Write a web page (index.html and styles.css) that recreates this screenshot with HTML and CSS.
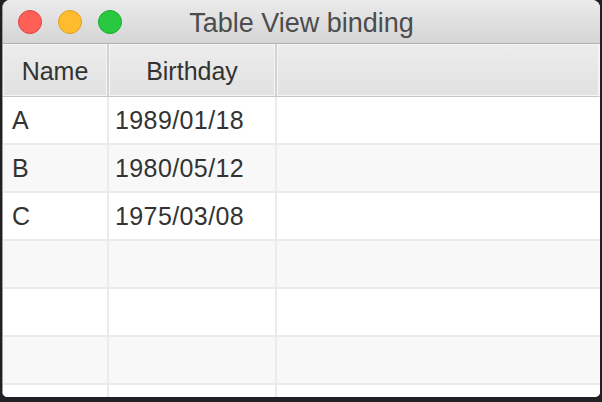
FILE: index.html
```html
<!DOCTYPE html>
<html>
<head>
<meta charset="utf-8">
<link rel="stylesheet" href="styles.css">
</head>
<body>
<div class="window">
  <div class="titlebar">
    <div class="lights">
      <span class="light red"></span>
      <span class="light yellow"></span>
      <span class="light green"></span>
    </div>
    <div class="title">Table View binding</div>
    <div></div>
  </div>
  <div class="table">
    <div class="head">Name</div>
    <div class="head">Birthday</div>
    <div class="head last"></div>

    <div class="cell odd">A</div>
    <div class="cell odd date">1989/01/18</div>
    <div class="cell odd last"></div>

    <div class="cell even">B</div>
    <div class="cell even date">1980/05/12</div>
    <div class="cell even last"></div>

    <div class="cell odd">C</div>
    <div class="cell odd date">1975/03/08</div>
    <div class="cell odd last"></div>

    <div class="cell even"></div>
    <div class="cell even"></div>
    <div class="cell even last"></div>

    <div class="cell odd"></div>
    <div class="cell odd"></div>
    <div class="cell odd last"></div>

    <div class="cell even"></div>
    <div class="cell even"></div>
    <div class="cell even last"></div>

    <div class="cell odd"></div>
    <div class="cell odd"></div>
    <div class="cell odd last"></div>
  </div>
</div>
</body>
</html>
```

FILE: styles.css
```css
html, body {
  margin: 0;
  padding: 0;
}
body {
  width: 602px;
  height: 402px;
  background: #1f2124;
  overflow: hidden;
  font-family: "Liberation Sans", Arial, sans-serif;
}
.window {
  margin-left: 2px;
  width: 598px;
  height: 397px;
  box-sizing: border-box;
  border-left: 1px solid #9c9c9c;
  border-radius: 8px 8px 5px 5px;
  background: #ffffff;
  overflow: hidden;
  display: flex;
  flex-direction: column;
}
.titlebar {
  height: 43px;
  flex: none;
  border-bottom: 1px solid #b1b1b1;
  background: linear-gradient(#ebebeb, #d5d5d5);
  display: grid;
  grid-template-columns: 1fr auto 1fr;
  align-items: center;
}
.lights {
  display: flex;
  gap: 16px;
  padding-left: 15px;
}
.light {
  width: 24px;
  height: 24px;
  border-radius: 50%;
  box-sizing: border-box;
}
.red { background: #fe5f57; border: 1px solid #e0443e; }
.yellow { background: #febc2e; border: 1px solid #dea123; }
.green { background: #28c840; border: 1px solid #1aab29; }
.title {
  font-size: 27px;
  color: #4c4c4c;
  padding-top: 3px;
}
.table {
  flex: 1;
  display: grid;
  grid-template-columns: 106px 168px 1fr;
  grid-auto-rows: 48px;
  grid-template-rows: 53px;
  overflow: hidden;
}
.head {
  box-sizing: border-box;
  background: linear-gradient(#ededed, #e1e1e1);
  border-right: 2px solid #d3d3d3;
  border-bottom: 1px solid #c6c6c6;
  box-shadow: inset 0 0 0 1px #f5f5f5;
  display: flex;
  align-items: center;
  justify-content: center;
  font-size: 25px;
  color: #333333;
  padding-top: 3px;
}
.head.last {
  border-right: 1px solid #f5f5f5;
}
.cell {
  box-sizing: border-box;
  border-right: 2px solid #ebebeb;
  border-bottom: 2px solid #ebebeb;
  display: flex;
  align-items: center;
  padding-left: 9px;
  font-size: 25px;
  color: #333333;
}
.cell.date {
  padding-left: 6px;
  letter-spacing: 0.4px;
}
.cell.last {
  border-right: none;
}
.odd { background: #ffffff; }
.even { background: #f8f8f8; }
```
